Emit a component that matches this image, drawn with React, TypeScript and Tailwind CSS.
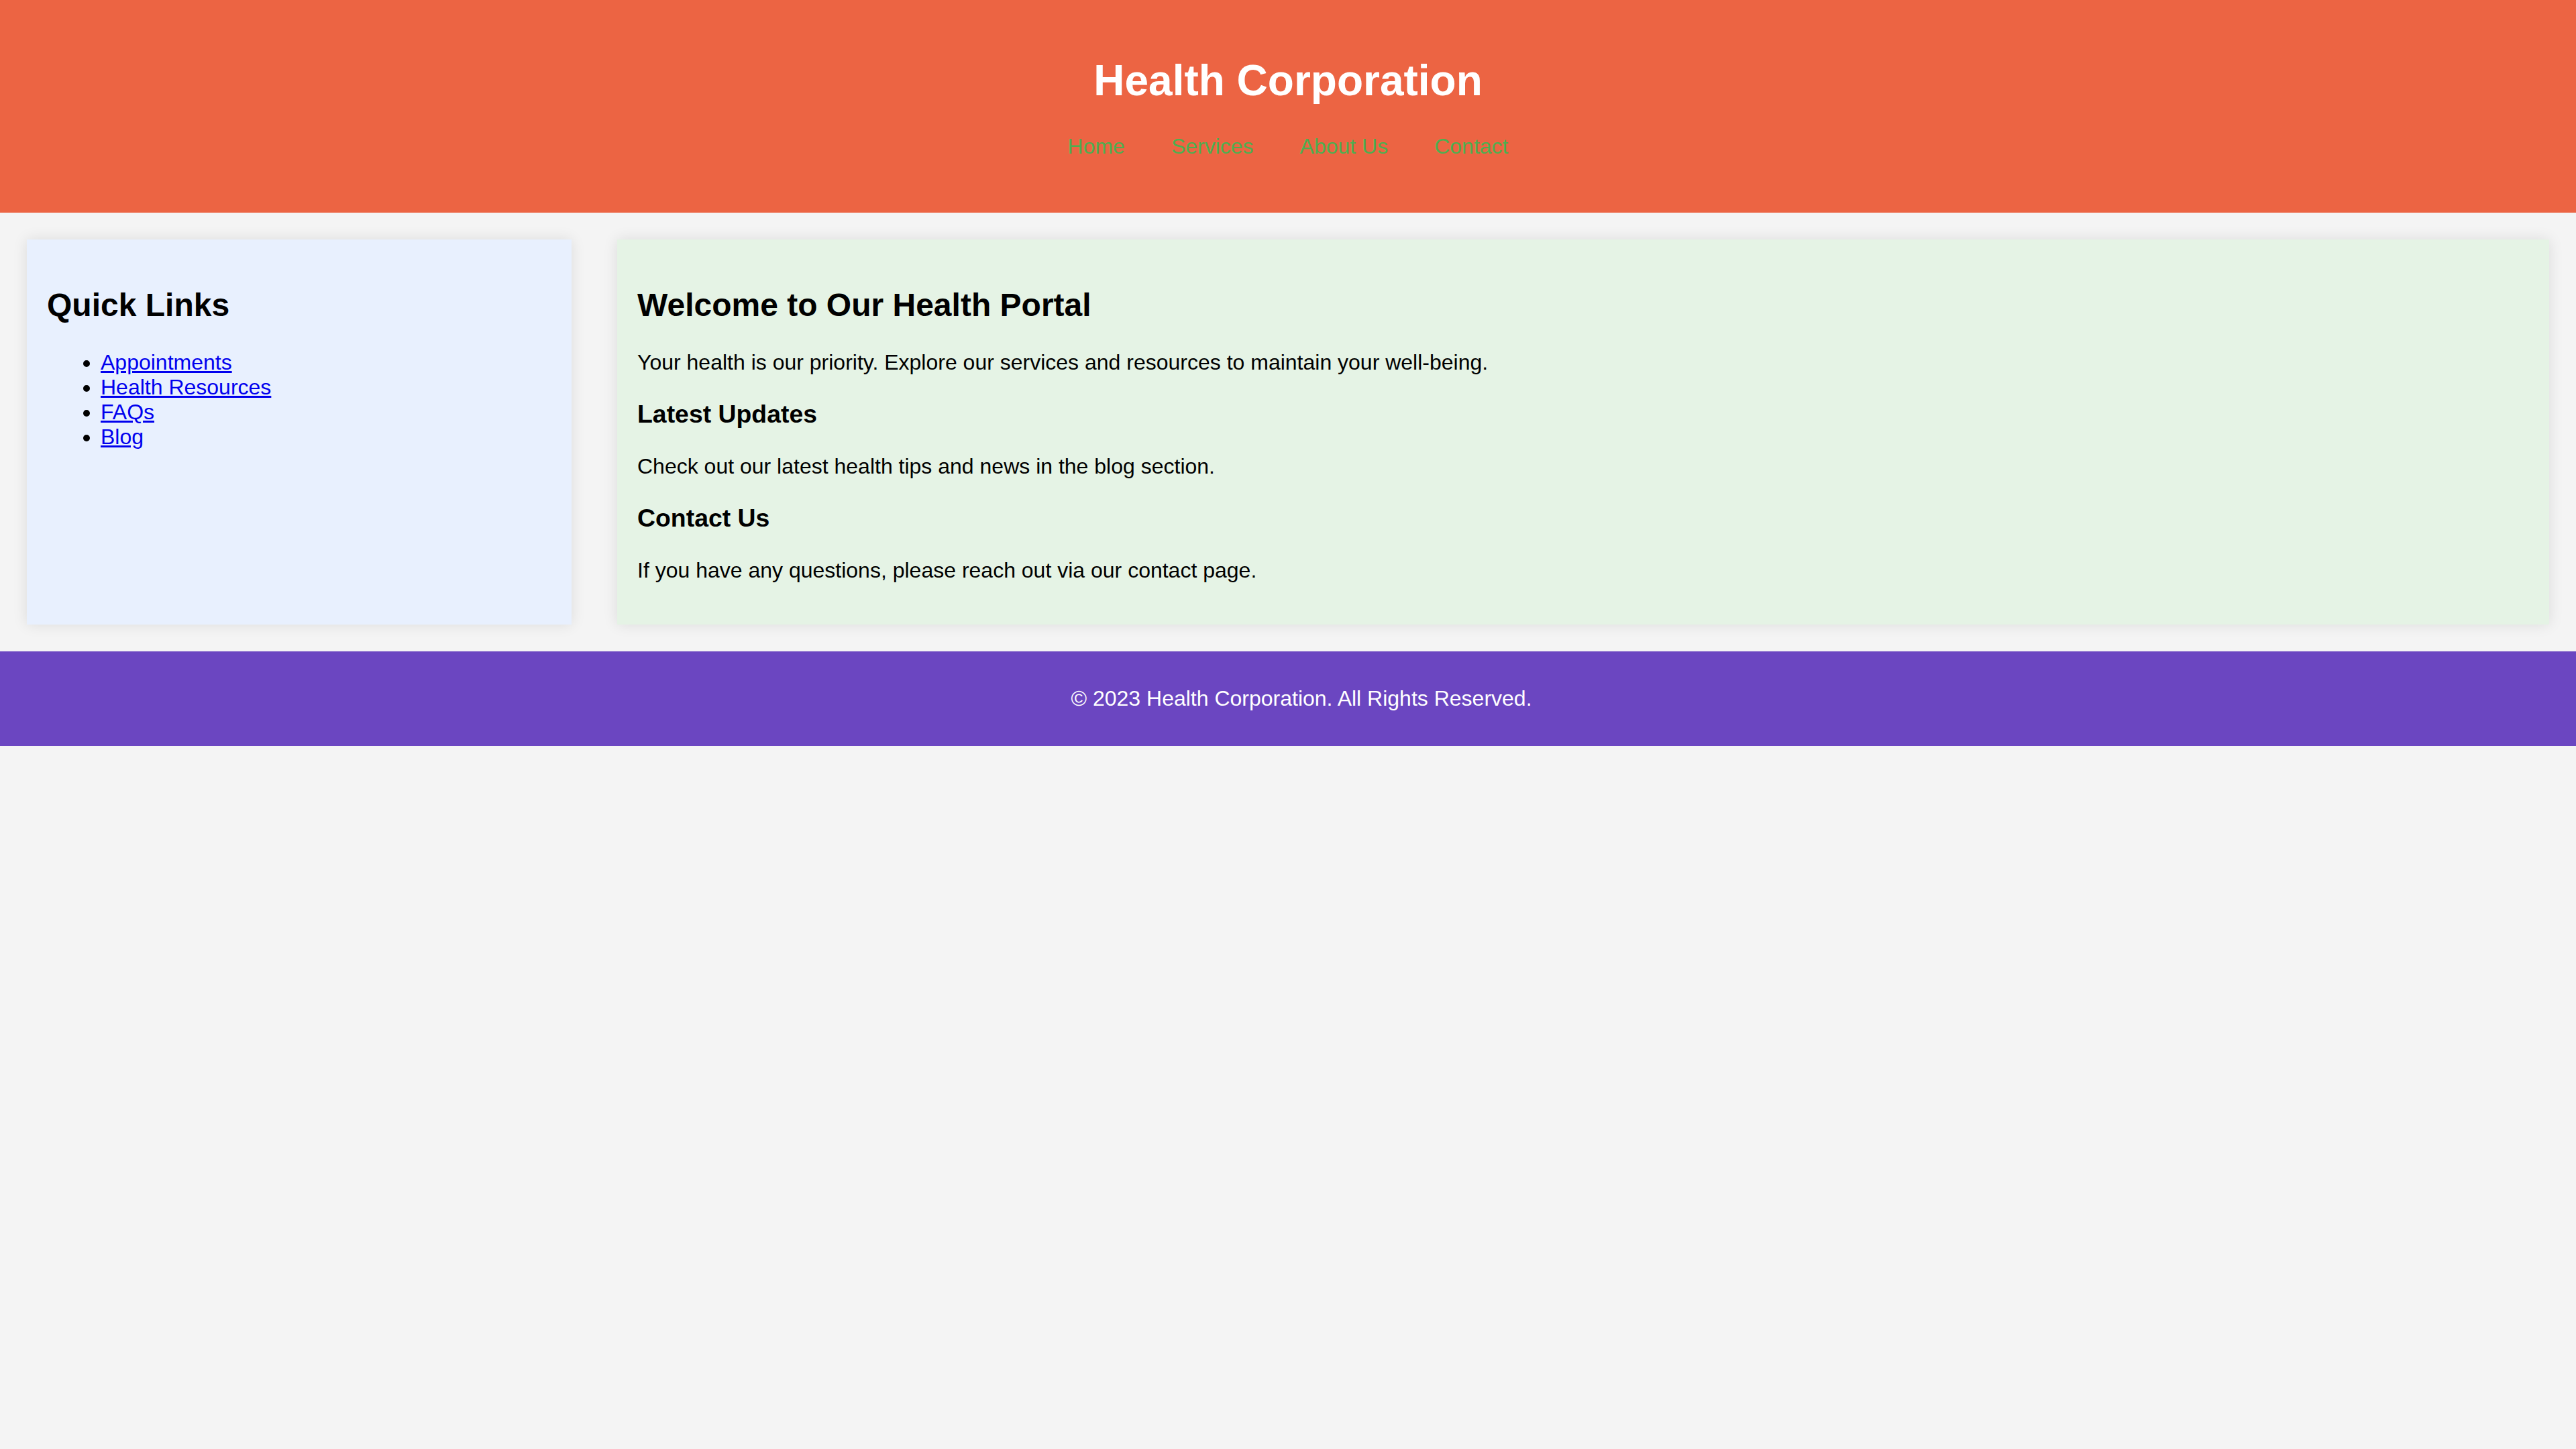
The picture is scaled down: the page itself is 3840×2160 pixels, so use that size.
export default function App() {
  return (
    <div className="min-h-screen bg-[#f4f4f4] font-['Liberation_Sans',Arial,sans-serif] text-[32px] leading-[normal] text-black">
      <header className="bg-[#ec6443] pt-[40px] pb-[80px] text-center">
        <h1 className="my-[43px] text-[64px] font-bold leading-[normal] text-white">Health Corporation</h1>
        <nav>
          <ul className="flex justify-center gap-[69px] leading-[normal]">
            <li><a className="text-[#4caf50]">Home</a></li>
            <li><a className="text-[#4caf50]">Services</a></li>
            <li><a className="text-[#4caf50]">About Us</a></li>
            <li><a className="text-[#4caf50]">Contact</a></li>
          </ul>
        </nav>
      </header>
      <main className="flex gap-[68px] p-[40px]">
        <aside className="w-[812px] shrink-0 bg-[#e8f0fe] p-[30px] shadow-[0_0_20px_rgba(0,0,0,0.1)]">
          <h2 className="my-[40px] text-[48px] font-bold leading-[normal]">Quick Links</h2>
          <ul className="my-[32px] list-disc pl-[80px] leading-[normal]">
            <li><a className="text-[#0000ee] underline">Appointments</a></li>
            <li><a className="text-[#0000ee] underline">Health Resources</a></li>
            <li><a className="text-[#0000ee] underline">FAQs</a></li>
            <li><a className="text-[#0000ee] underline">Blog</a></li>
          </ul>
        </aside>
        <section className="flex-1 bg-[#e5f3e5] p-[30px] shadow-[0_0_20px_rgba(0,0,0,0.1)]">
          <h2 className="my-[40px] text-[48px] font-bold leading-[normal]">Welcome to Our Health Portal</h2>
          <p className="my-[32px]">Your health is our priority. Explore our services and resources to maintain your well-being.</p>
          <h3 className="my-[37.4px] text-[37.4px] font-bold leading-[normal]">Latest Updates</h3>
          <p className="my-[32px]">Check out our latest health tips and news in the blog section.</p>
          <h3 className="my-[37.4px] text-[37.4px] font-bold leading-[normal]">Contact Us</h3>
          <p className="my-[32px]">If you have any questions, please reach out via our contact page.</p>
        </section>
      </main>
      <footer className="bg-[#6b46c1] py-[20px] pl-[40px] text-center text-white">
        <p className="my-[32px]">© 2023 Health Corporation. All Rights Reserved.</p>
      </footer>
    </div>
  );
}
